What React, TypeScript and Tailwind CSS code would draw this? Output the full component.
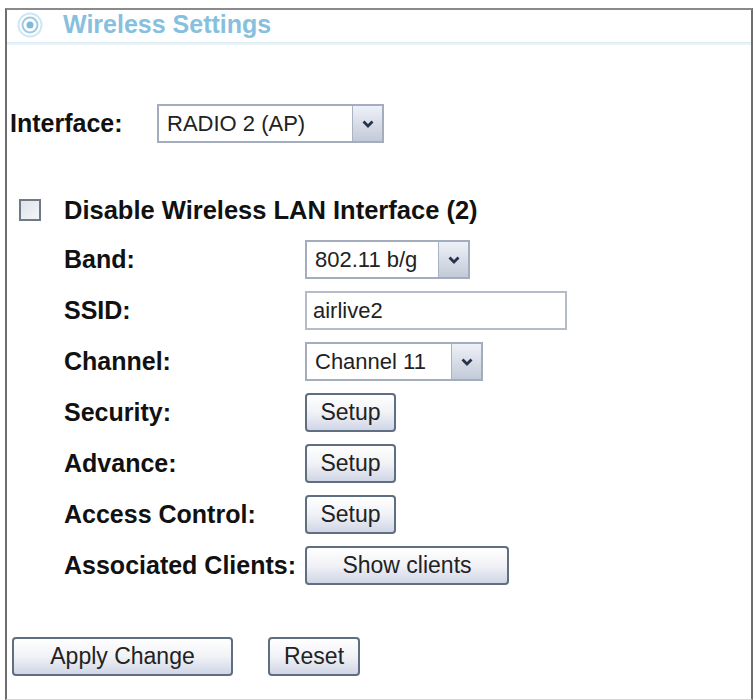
import React, { useState } from 'react';

const font = { fontFamily: '"Liberation Sans", Arial, sans-serif' };

const Arrow: React.FC = () => (
  <span className="flex h-full w-[30px] items-center justify-center border-l border-[#a9b3c4] bg-gradient-to-b from-[#eef1f7] to-[#c3cad8]">
    <svg width="14" height="10" viewBox="0 0 14 10">
      <path d="M2.5 2.5 L7 7 L11.5 2.5" fill="none" stroke="#27334a" strokeWidth="2.8" />
    </svg>
  </span>
);

const Select: React.FC<{ value: string; width: string }> = ({ value, width }) => (
  <div className={`flex h-[39px] items-center border-2 border-[#a3adbd] bg-white ${width}`}>
    <span className="flex-1 whitespace-nowrap pl-[8px] text-[22px] text-[#222]">{value}</span>
    <Arrow />
  </div>
);

const Btn: React.FC<{ label: string; width: string }> = ({ label, width }) => (
  <button
    className={`h-[39px] rounded-[4px] border-2 border-[#5f6e80] bg-gradient-to-b from-white via-[#f1f2f6] to-[#d0d6e6] text-[23px] leading-none text-[#222] ${width}`}
  >
    {label}
  </button>
);

const Row: React.FC<{ label: string; children: React.ReactNode }> = ({ label, children }) => (
  <div className="flex h-[51px] items-center">
    <span className="w-[241px] whitespace-nowrap text-[25px] font-bold text-[#111]">{label}</span>
    {children}
  </div>
);

export default function App() {
  const [disabled, setDisabled] = useState(false);

  return (
    <div className="h-[700px] w-[754px] bg-white pl-[5px] pt-[8px]" style={font}>
      <div className="flex h-[692px] w-[748px] flex-col border-x-2 border-t-2 border-b border-x-[#6e6e6e] border-t-[#8a8a8a] border-b-[#d4d4d4]">
        <div className="flex h-[30px] items-center pl-[10px]">
          <svg width="26" height="26" viewBox="0 0 26 26">
            <circle cx="13" cy="13" r="11.5" fill="none" stroke="#cfe6f3" strokeWidth="2" />
            <circle cx="13" cy="13" r="7.5" fill="none" stroke="#9ccbe4" strokeWidth="2" />
            <circle cx="13" cy="13" r="3.5" fill="#7fb8da" />
          </svg>
          <span className="ml-[20px] text-[25px] font-bold text-[#86c0de]">Wireless Settings</span>
        </div>
        <div className="mt-[2px] h-[3px] bg-gradient-to-b from-[#dcebf3] to-[#f0f8fc]" />

        <div className="mt-[59px] flex items-center pl-[3px]">
          <span className="w-[147px] text-[25px] font-bold text-[#111]">Interface:</span>
          <Select value="RADIO 2 (AP)" width="w-[227px]" />
        </div>

        <div className="mt-[48px] flex items-center pl-[12px]">
          <input
            type="checkbox"
            checked={disabled}
            onChange={(e) => setDisabled(e.target.checked)}
            className="h-[22px] w-[22px] appearance-none border-2 border-[#6f7a89] bg-gradient-to-br from-[#dfe3e8] to-[#f3f5f7]"
          />
          <span className="ml-[23px] whitespace-nowrap text-[25.5px] font-bold text-[#111]">Disable Wireless LAN Interface (2)</span>
        </div>

        <div className="mt-[5px] flex flex-col pl-[57px]">
          <Row label="Band:">
            <Select value="802.11 b/g" width="w-[165px]" />
          </Row>
          <Row label="SSID:">
            <input
              defaultValue="airlive2"
              className="h-[39px] w-[262px] border-2 border-[#b5bcc7] pl-[6px] text-[22px] text-[#222] outline-none"
            />
          </Row>
          <Row label="Channel:">
            <Select value="Channel 11" width="w-[178px]" />
          </Row>
          <Row label="Security:">
            <Btn label="Setup" width="w-[91px]" />
          </Row>
          <Row label="Advance:">
            <Btn label="Setup" width="w-[91px]" />
          </Row>
          <Row label="Access Control:">
            <Btn label="Setup" width="w-[91px]" />
          </Row>
          <Row label="Associated Clients:">
            <Btn label="Show clients" width="w-[204px]" />
          </Row>
        </div>

        <div className="mt-[46px] flex items-center gap-[35px] pl-[5px]">
          <Btn label="Apply Change" width="w-[221px]" />
          <Btn label="Reset" width="w-[92px]" />
        </div>
      </div>
    </div>
  );
}
